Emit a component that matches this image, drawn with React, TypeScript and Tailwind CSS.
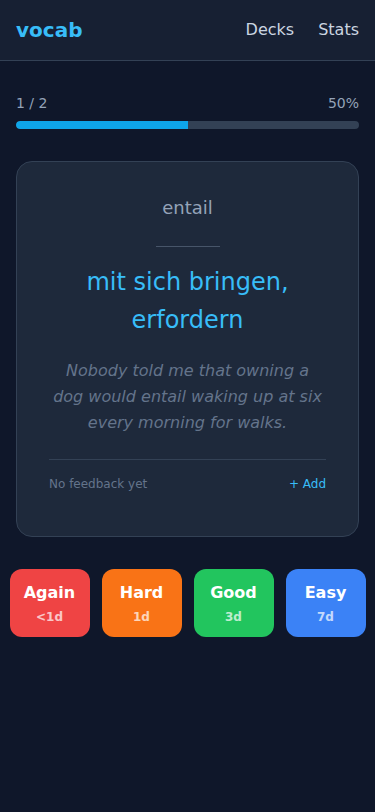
export default function App() {
  const buttons = [
    { label: "Again", sub: "<1d", cls: "bg-[#ef4444]" },
    { label: "Hard", sub: "1d", cls: "bg-[#f97316]" },
    { label: "Good", sub: "3d", cls: "bg-[#22c55e]" },
    { label: "Easy", sub: "7d", cls: "bg-[#3b82f6]" },
  ];
  return (
    <div className="min-h-[812px] bg-[#0f172a] font-['DejaVu_Sans',sans-serif] overflow-hidden">
      <header className="h-[61px] flex items-center justify-between px-4 bg-[#172033] border-b border-[#334155]">
        <span className="text-xl font-bold text-[#38bdf8]">vocab</span>
        <nav className="flex gap-6 text-base text-[#cbd5e1]">
          <span>Decks</span>
          <span>Stats</span>
        </nav>
      </header>
      <main className="px-4 pt-8">
        <div className="flex justify-between text-sm text-[#94a3b8]">
          <span>1 / 2</span>
          <span>50%</span>
        </div>
        <div className="mt-2 h-2 rounded-full bg-[#334155] overflow-hidden">
          <div className="h-full w-1/2 bg-[#0ea5e9] rounded-l-full" />
        </div>
        <div className="mt-8 rounded-2xl border border-[#334155] bg-[#1e293b] px-8 pt-8 pb-11 text-center">
          <div className="text-lg text-[#94a3b8]">entail</div>
          <div className="mx-auto mt-6 mb-4 w-16 border-t border-[#475569]" />
          <div className="text-2xl leading-[38px] text-[#38bdf8]">mit sich bringen, erfordern</div>
          <p className="mt-[19px] italic text-base leading-relaxed text-[#64748b]">
            Nobody told me that owning a dog would entail waking up at six every morning for walks.
          </p>
          <div className="mt-[23px] border-t border-[#334155] pt-4 flex justify-between text-xs">
            <span className="text-[#64748b]">No feedback yet</span>
            <span className="text-[#38bdf8]">+ Add</span>
          </div>
        </div>
      </main>
      <div className="mt-8 flex justify-center gap-3">
        {buttons.map((b) => (
          <div
            key={b.label}
            className={`${b.cls} w-20 shrink-0 h-[68px] rounded-xl flex flex-col items-center justify-center text-white`}
          >
            <span className="font-bold text-base">{b.label}</span>
            <span className="text-xs font-bold opacity-70 mt-1">{b.sub}</span>
          </div>
        ))}
      </div>
    </div>
  );
}
